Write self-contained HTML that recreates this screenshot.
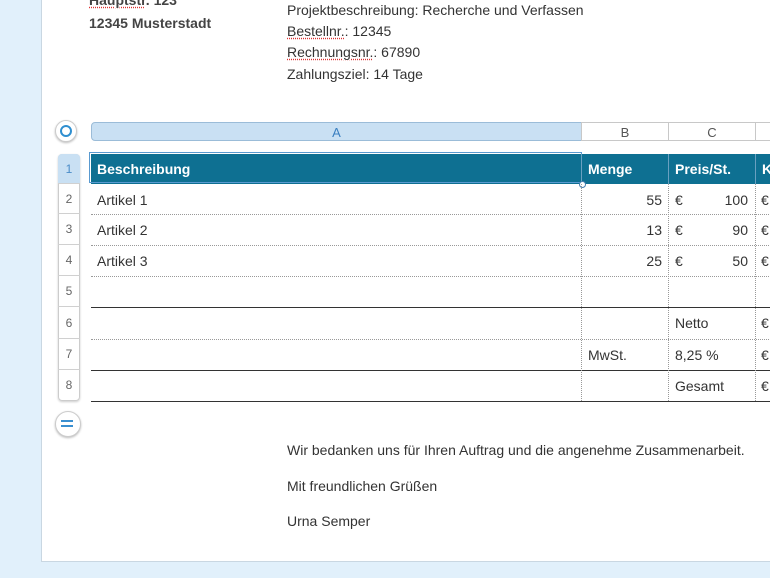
<!DOCTYPE html>
<html><head><meta charset="utf-8"><style>
body{margin:0;width:770px;height:578px;background:#e1f0fb;position:relative;overflow:hidden;font-family:"Liberation Sans",sans-serif;}
.page{position:absolute;left:41px;top:-2px;width:740px;height:562px;background:#fff;border:1px solid #c9d7e2;}
.t{position:absolute;font-size:14px;color:#333;white-space:nowrap;}
.sp{text-decoration:underline dotted #d33;text-underline-offset:2px;}
.abs{position:absolute;}
.hd{position:absolute;top:122px;height:19px;border:1px solid #c8c8c8;background:#fff;font-size:13px;color:#555;text-align:center;line-height:19px;box-sizing:border-box;}
.rh{position:absolute;left:58px;width:22px;box-sizing:border-box;border-bottom:1px solid #d0d0d0;font-size:12px;color:#666;text-align:center;}
.c{position:absolute;font-size:14px;color:#333;}
.hl{position:absolute;left:91px;width:680px;height:0;}
.vl{position:absolute;top:184px;height:217px;width:0;border-left:1px dotted #999;}
</style></head><body>
<div class="page"></div>
<div class="t" style="left:89px;top:-8px;font-weight:bold;color:#444"><span class="sp">Hauptstr</span>. 123</div>
<div class="t" style="left:89px;top:15px;font-weight:bold;color:#444">12345 Musterstadt</div>
<div class="t" style="left:287px;top:2px">Projektbeschreibung: Recherche und Verfassen</div>
<div class="t" style="left:287px;top:23px"><span class="sp">Bestellnr.</span>: 12345</div>
<div class="t" style="left:287px;top:44px"><span class="sp">Rechnungsnr.</span>: 67890</div>
<div class="t" style="left:287px;top:66px">Zahlungsziel: 14 Tage</div>

<div class="abs" style="left:55px;top:120px;width:20px;height:20px;border:1px solid #ccc;border-radius:50%;box-shadow:0 1px 2px #bbb;background:#fff"></div>
<div class="abs" style="left:60px;top:125px;width:8px;height:8px;border:2px solid #2f8fd0;border-radius:50%"></div>

<div class="hd" style="left:91px;width:491px;background:#c9e0f3;border-color:#9bbcd8;border-radius:4px 0 0 4px;color:#3a7fc0">A</div>
<div class="hd" style="left:581px;width:88px">B</div>
<div class="hd" style="left:668px;width:88px">C</div>
<div class="hd" style="left:755px;width:30px"></div>

<div class="abs" style="left:58px;top:154px;width:22px;height:247px;border:1px solid #ccc;border-radius:4px;box-sizing:border-box;box-shadow:0 1px 2px #ccc"></div>
<div class="rh" style="top:154px;height:30px;line-height:30px;background:#c9e0f3;color:#4a8cc8;border-radius:4px 4px 0 0">1</div>
<div class="rh" style="top:184px;height:30px;line-height:30px">2</div>
<div class="rh" style="top:214px;height:31px;line-height:31px">3</div>
<div class="rh" style="top:245px;height:31px;line-height:31px">4</div>
<div class="rh" style="top:276px;height:31px;line-height:31px">5</div>
<div class="rh" style="top:307px;height:32px;line-height:32px">6</div>
<div class="rh" style="top:339px;height:31px;line-height:31px">7</div>
<div class="rh" style="top:370px;height:31px;line-height:31px;border:none">8</div>

<div class="abs" style="left:91px;top:154px;width:690px;height:30px;background:#0e7092"></div>
<div class="abs" style="left:89px;top:152px;width:493px;height:31px;border:1px solid #5a9ad0;box-sizing:border-box"></div>
<div class="abs" style="left:581px;top:154px;width:1px;height:30px;background:#6aa0c0"></div>
<div class="abs" style="left:668px;top:154px;width:1px;height:30px;background:#6aa0c0"></div>
<div class="abs" style="left:755px;top:154px;width:1px;height:30px;background:#6aa0c0"></div>
<div class="abs" style="left:579px;top:181px;width:5px;height:5px;border:1px solid #4a80b0;border-radius:50%;background:#fff"></div>
<div class="c" style="left:97px;top:161px;color:#fff;font-weight:bold">Beschreibung</div>
<div class="c" style="left:588px;top:161px;color:#fff;font-weight:bold">Menge</div>
<div class="c" style="left:675px;top:161px;color:#fff;font-weight:bold">Preis/St.</div>
<div class="c" style="left:762px;top:161px;color:#fff;font-weight:bold">K</div>

<div class="hl" style="top:214px;border-top:1px dotted #999"></div>
<div class="hl" style="top:245px;border-top:1px dotted #999"></div>
<div class="hl" style="top:276px;border-top:1px dotted #999"></div>
<div class="hl" style="top:307px;border-top:1px solid #333"></div>
<div class="hl" style="top:339px;border-top:1px dotted #999"></div>
<div class="hl" style="top:370px;border-top:1px solid #333"></div>
<div class="hl" style="top:401px;border-top:1px solid #333"></div>
<div class="vl" style="left:581px"></div>
<div class="vl" style="left:668px"></div>
<div class="vl" style="left:755px"></div>

<div class="c" style="left:97px;top:192px">Artikel 1</div>
<div class="c" style="left:97px;top:222px">Artikel 2</div>
<div class="c" style="left:97px;top:253px">Artikel 3</div>
<div class="c" style="left:630px;top:192px;width:32px;text-align:right">55</div>
<div class="c" style="left:630px;top:222px;width:32px;text-align:right">13</div>
<div class="c" style="left:630px;top:253px;width:32px;text-align:right">25</div>
<div class="c" style="left:675px;top:192px">€</div><div class="c" style="left:710px;top:192px;width:38px;text-align:right">100</div>
<div class="c" style="left:675px;top:222px">€</div><div class="c" style="left:710px;top:222px;width:38px;text-align:right">90</div>
<div class="c" style="left:675px;top:253px">€</div><div class="c" style="left:710px;top:253px;width:38px;text-align:right">50</div>
<div class="c" style="left:761px;top:192px">€</div>
<div class="c" style="left:761px;top:222px">€</div>
<div class="c" style="left:761px;top:253px">€</div>
<div class="c" style="left:675px;top:315px">Netto</div><div class="c" style="left:761px;top:315px">€</div>
<div class="c" style="left:588px;top:347px">MwSt.</div><div class="c" style="left:675px;top:347px">8,25 %</div><div class="c" style="left:761px;top:347px">€</div>
<div class="c" style="left:675px;top:378px">Gesamt</div><div class="c" style="left:761px;top:378px">€</div>

<div class="abs" style="left:55px;top:411px;width:24px;height:24px;border:1px solid #ccc;border-radius:50%;box-shadow:0 1px 2px #bbb;background:#fff"></div>
<div class="abs" style="left:61px;top:420px;width:12px;height:2px;background:#3a8fd0"></div>
<div class="abs" style="left:61px;top:425px;width:12px;height:2px;background:#3a8fd0"></div>

<div class="t" style="left:287px;top:442px">Wir bedanken uns für Ihren Auftrag und die angenehme Zusammenarbeit.</div>
<div class="t" style="left:287px;top:478px">Mit freundlichen Grüßen</div>
<div class="t" style="left:287px;top:513px">Urna Semper</div>
</body></html>
